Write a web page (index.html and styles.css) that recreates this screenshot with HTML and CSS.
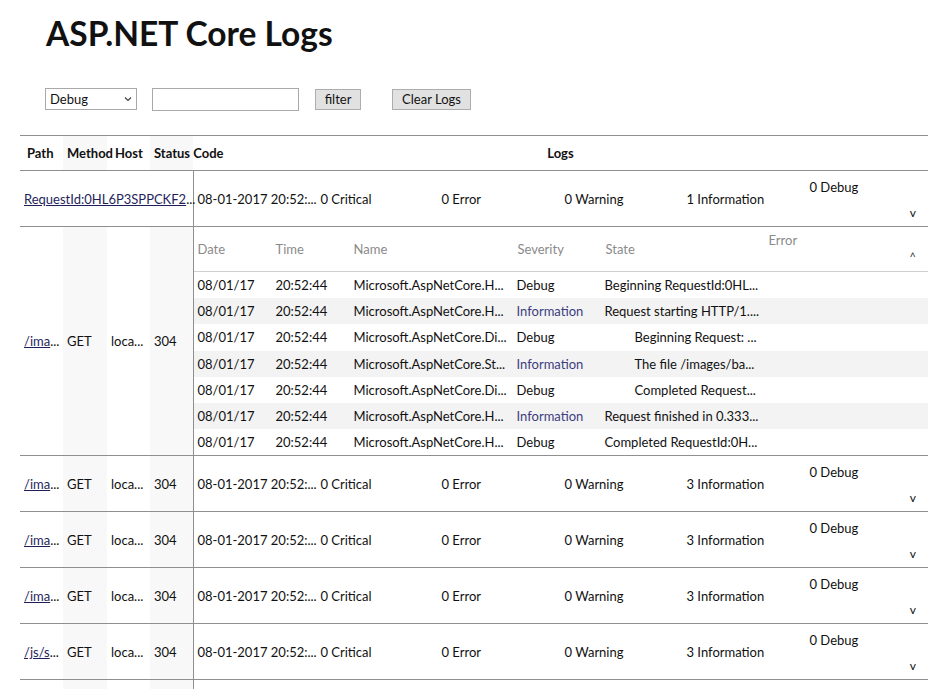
FILE: index.html
```html
<!DOCTYPE html>
<html lang="en">
<head>
<meta charset="utf-8">
<title>ASP.NET Core Logs</title>
<link rel="stylesheet" href="styles.css">
</head>
<body>
<h1 class="title">ASP.NET Core Logs</h1>
<div class="toolbar">
  <div class="select-wrap">
    <select class="level"><option>Debug</option></select>
    <svg class="chev" width="8" height="6" viewBox="0 0 8 6"><path d="M1 1.5 L4 4.5 L7 1.5" fill="none" stroke="#444" stroke-width="1.2"/></svg>
  </div>
  <input class="search" type="text">
  <button class="btn btn-filter">filter</button>
  <button class="btn btn-clear">Clear Logs</button>
</div>

<table class="requests">
  <colgroup>
    <col class="c-path"><col class="c-method"><col class="c-host"><col class="c-status"><col class="c-logs">
  </colgroup>
  <thead>
    <tr>
      <th class="th-path">Path</th>
      <th class="shade">Method</th>
      <th class="th-host">Host</th>
      <th class="shade">Status Code</th>
      <th class="th-logs">Logs</th>
    </tr>
  </thead>
  <tbody>
    <tr class="req">
      <td colspan="4" class="cell"><a href="#">RequestId:0HL6P3SPPCKF2</a>...</td>
      <td class="logs">
        <div class="summary">
          <span>08-01-2017 20:52:...</span><span>0 Critical</span><span>0 Error</span><span>0 Warning</span><span>1 Information</span>
          <span class="last"><span>0 Debug</span><span class="toggle">v</span></span>
        </div>
      </td>
    </tr>

    <tr class="req open">
      <td class="cell"><a href="#">/ima</a>...</td>
      <td class="cell shade">GET</td>
      <td class="cell">loca...</td>
      <td class="cell shade">304</td>
      <td class="logs">
        <div class="detail">
          <div class="d-head">
            <span>Date</span><span>Time</span><span>Name</span><span>Severity</span><span>State</span>
            <span class="last"><span>Error</span><span class="toggle">^</span></span>
          </div>
          <div class="d-row"><span>08/01/17</span><span>20:52:44</span><span>Microsoft.AspNetCore.H...</span><span>Debug</span><span class="state">Beginning RequestId:0HL...</span><span></span></div>
          <div class="d-row alt"><span>08/01/17</span><span>20:52:44</span><span>Microsoft.AspNetCore.H...</span><span class="info">Information</span><span class="state">Request starting HTTP/1....</span><span></span></div>
          <div class="d-row"><span>08/01/17</span><span>20:52:44</span><span>Microsoft.AspNetCore.Di...</span><span>Debug</span><span class="state nested">Beginning Request: ...</span><span></span></div>
          <div class="d-row alt"><span>08/01/17</span><span>20:52:44</span><span>Microsoft.AspNetCore.St...</span><span class="info">Information</span><span class="state nested">The file /images/ba...</span><span></span></div>
          <div class="d-row"><span>08/01/17</span><span>20:52:44</span><span>Microsoft.AspNetCore.Di...</span><span>Debug</span><span class="state nested">Completed Request...</span><span></span></div>
          <div class="d-row alt"><span>08/01/17</span><span>20:52:44</span><span>Microsoft.AspNetCore.H...</span><span class="info">Information</span><span class="state">Request finished in 0.333...</span><span></span></div>
          <div class="d-row"><span>08/01/17</span><span>20:52:44</span><span>Microsoft.AspNetCore.H...</span><span>Debug</span><span class="state">Completed RequestId:0H...</span><span></span></div>
        </div>
      </td>
    </tr>

    <tr class="req">
      <td class="cell"><a href="#">/ima</a>...</td>
      <td class="cell shade">GET</td>
      <td class="cell">loca...</td>
      <td class="cell shade">304</td>
      <td class="logs">
        <div class="summary">
          <span>08-01-2017 20:52:...</span><span>0 Critical</span><span>0 Error</span><span>0 Warning</span><span>3 Information</span>
          <span class="last"><span>0 Debug</span><span class="toggle">v</span></span>
        </div>
      </td>
    </tr>
    <tr class="req">
      <td class="cell"><a href="#">/ima</a>...</td>
      <td class="cell shade">GET</td>
      <td class="cell">loca...</td>
      <td class="cell shade">304</td>
      <td class="logs">
        <div class="summary">
          <span>08-01-2017 20:52:...</span><span>0 Critical</span><span>0 Error</span><span>0 Warning</span><span>3 Information</span>
          <span class="last"><span>0 Debug</span><span class="toggle">v</span></span>
        </div>
      </td>
    </tr>
    <tr class="req">
      <td class="cell"><a href="#">/ima</a>...</td>
      <td class="cell shade">GET</td>
      <td class="cell">loca...</td>
      <td class="cell shade">304</td>
      <td class="logs">
        <div class="summary">
          <span>08-01-2017 20:52:...</span><span>0 Critical</span><span>0 Error</span><span>0 Warning</span><span>3 Information</span>
          <span class="last"><span>0 Debug</span><span class="toggle">v</span></span>
        </div>
      </td>
    </tr>
    <tr class="req">
      <td class="cell"><a href="#">/js/s</a>...</td>
      <td class="cell shade">GET</td>
      <td class="cell">loca...</td>
      <td class="cell shade">304</td>
      <td class="logs">
        <div class="summary">
          <span>08-01-2017 20:52:...</span><span>0 Critical</span><span>0 Error</span><span>0 Warning</span><span>3 Information</span>
          <span class="last"><span>0 Debug</span><span class="toggle">v</span></span>
        </div>
      </td>
    </tr>
    <tr class="req">
      <td class="cell"><a href="#">/css</a>...</td>
      <td class="cell shade">GET</td>
      <td class="cell">loca...</td>
      <td class="cell shade">304</td>
      <td class="logs">
        <div class="summary">
          <span>08-01-2017 20:52:...</span><span>0 Critical</span><span>0 Error</span><span>0 Warning</span><span>3 Information</span>
          <span class="last"><span>0 Debug</span><span class="toggle">v</span></span>
        </div>
      </td>
    </tr>
  </tbody>
</table>
</body>
</html>
```

FILE: styles.css
```css
* { box-sizing: border-box; }

body {
  margin: 0;
  background: #fff;
  color: #111;
  font-family: "Lato", "Noto Sans", sans-serif;
  font-size: 13px;
}

.title {
  margin: 12px 0 0 46px;
  font-size: 33.5px;
  line-height: 42px;
  font-weight: 700;
  color: #111;
}

.toolbar {
  display: flex;
  align-items: center;
  gap: 15px;
  margin: 33px 0 0 45px;
  height: 24px;
}

.select-wrap {
  position: relative;
  width: 92px;
  height: 22px;
}

.level {
  appearance: none;
  -webkit-appearance: none;
  width: 92px;
  height: 22px;
  border: 1px solid #a9a9a9;
  background: #fff;
  font: inherit;
  padding: 0 0 0 4px;
  color: #111;
  border-radius: 0;
}

.chev {
  position: absolute;
  right: 5px;
  top: 8px;
  pointer-events: none;
}

.search {
  width: 147px;
  height: 23px;
  border: 1px solid #a9a9a9;
  margin: 0 1px 0 0;
}

.btn {
  height: 21px;
  border: 1px solid #adadad;
  background: #e1e1e1;
  font: inherit;
  color: #111;
  padding: 0 8px;
  border-radius: 0;
}

.btn-filter { width: 46px; }
.btn-clear { width: 79px; margin-left: 16px; }

.requests {
  margin: 24px 0 0 20px;
  width: 908px;
  border-collapse: collapse;
  table-layout: fixed;
}

.c-path { width: 43px; }
.c-method { width: 44px; }
.c-host { width: 43px; }
.c-status { width: 43px; }

.requests thead tr {
  border-top: 1px solid #8f8f8f;
  border-bottom: 1px solid #8f8f8f;
}

.requests th {
  height: 35px;
  font-weight: 700;
  text-align: left;
  padding: 0 0 1px 4px;
  white-space: nowrap;
  overflow: visible;
}

.requests th.th-path { padding-left: 7px; }
.requests th.th-host { padding-left: 8px; }
.requests th.th-logs { text-align: center; padding: 0 0 1px 0; }

.shade { background: #f8f8f8; }

.req { border-bottom: 1px solid #8f8f8f; }
.req > td { height: 55px; padding: 0; }
.req.open > td { height: 228px; }

.cell {
  padding: 0 0 0 4px !important;
  white-space: nowrap;
  vertical-align: middle;
}

.cell a { color: #1f1f5c; text-decoration: underline; }

.logs {
  border-left: 1px solid #8f8f8f;
  vertical-align: top;
}

.summary {
  display: grid;
  grid-template-columns: 122px 122px 123px 122px 123px 1fr;
  align-items: center;
  height: 55px;
  padding-left: 4px;
  white-space: nowrap;
}

.summary > span:nth-child(2) { padding-left: 1px; }

.summary .last,
.d-head .last {
  display: flex;
  flex-direction: column;
  justify-content: space-between;
  align-self: stretch;
  padding: 8px 12px 6px 0;
}

.toggle {
  align-self: flex-end;
  font-size: 12px;
}

.detail { width: 100%; }

.d-head,
.d-row {
  display: grid;
  grid-template-columns: 78px 78px 164px 88px 163px 1fr;
  white-space: nowrap;
}

.d-head {
  height: 45px;
  align-items: center;
  color: #8a8a8a;
  border-bottom: 1px solid #cfcfcf;
}

.d-head > span:not(.last) { padding-left: 4px; }
.d-head .last { color: #8a8a8a; padding-left: 4px; padding-top: 5px; }
.d-head .toggle { color: #333; font-size: 11px; padding-bottom: 2px; }

.d-row {
  height: 26.2px;
  align-items: center;
}

.d-row > span { padding-left: 4px; overflow: hidden; }
.d-row > span:nth-child(4) { padding-left: 3px; }
.d-row .state { padding-left: 3px; }
.d-row .state.nested { padding-left: 33px; }

.d-row.alt { background: #f3f3f3; }

.info { color: #3d3d7e; }
```
